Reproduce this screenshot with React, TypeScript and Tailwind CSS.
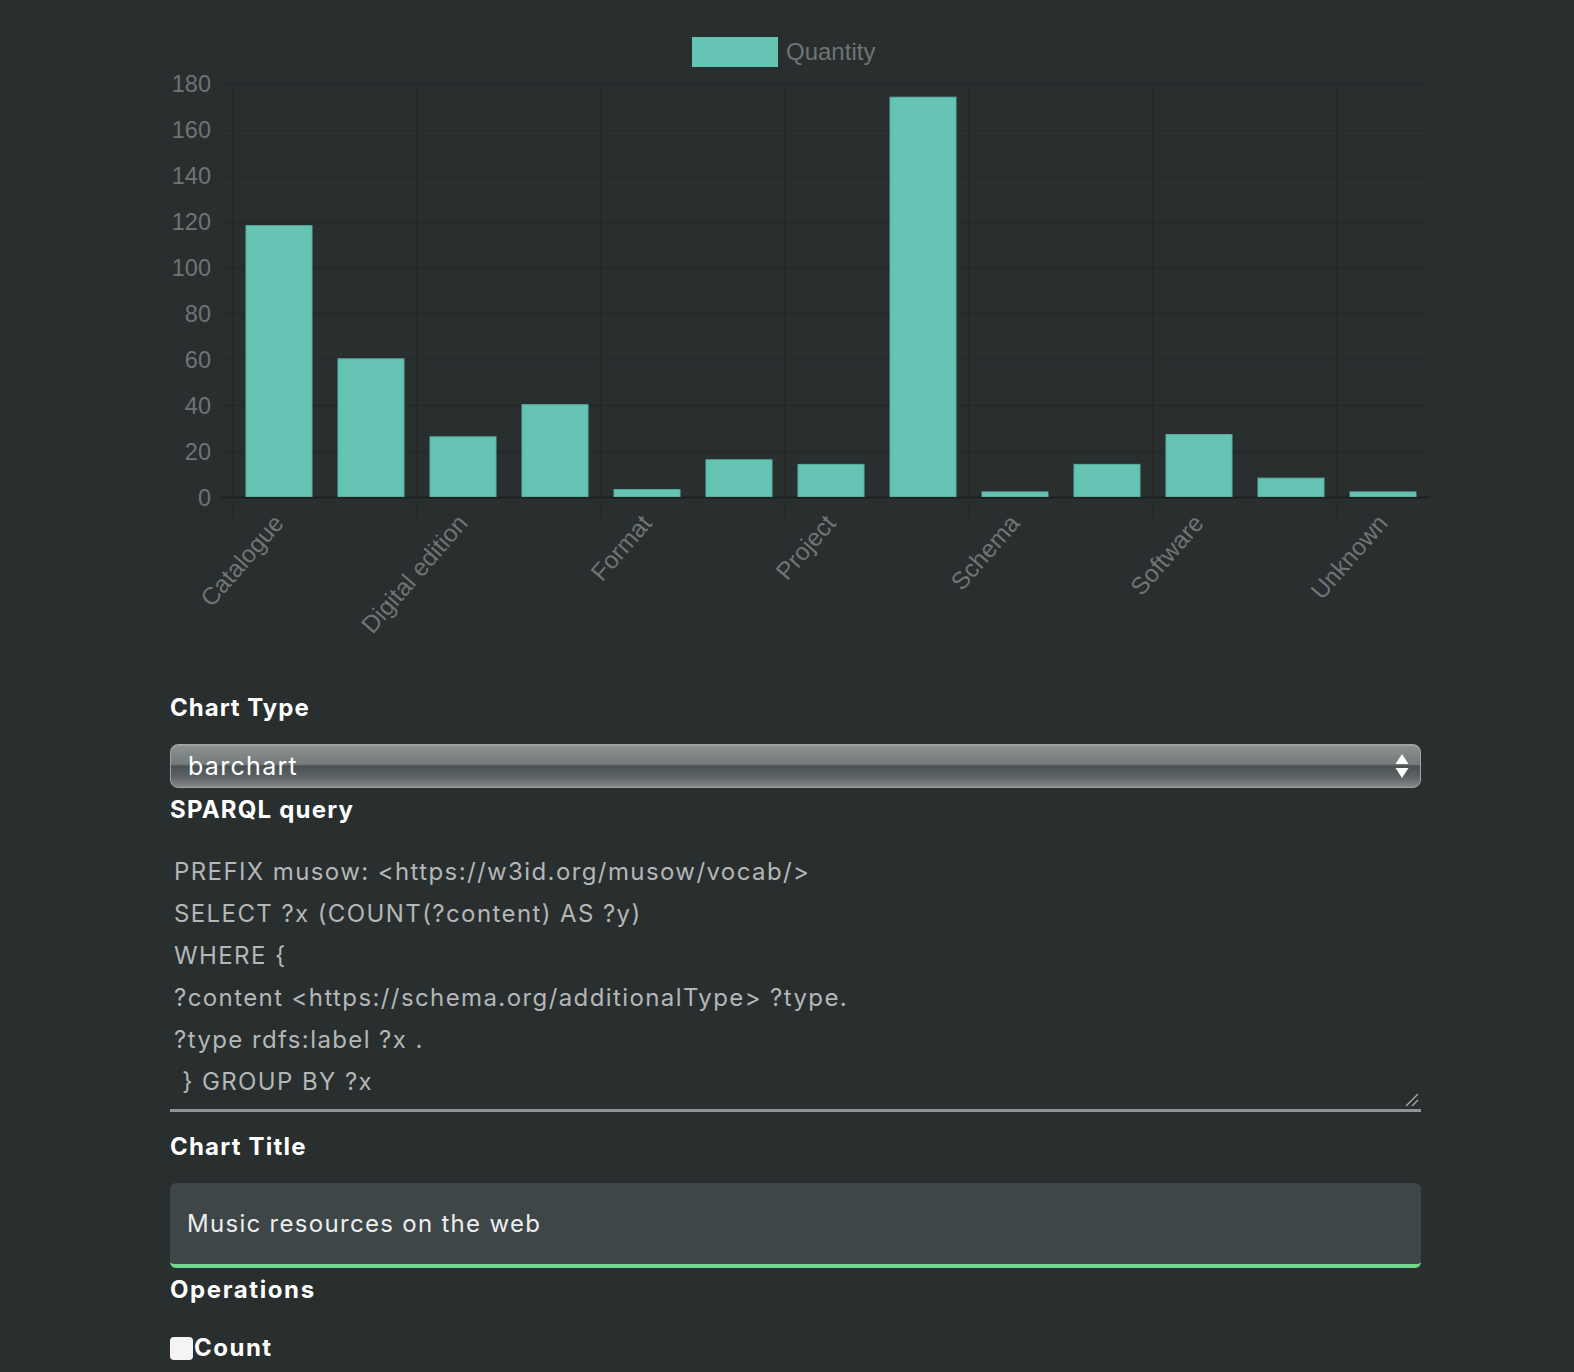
import React from 'react';

const values = [118, 60, 26, 40, 3, 16, 14, 174, 2, 14, 27, 8, 2];
const labels: Record<number, string> = {
  0: 'Catalogue',
  2: 'Digital edition',
  4: 'Format',
  6: 'Project',
  8: 'Schema',
  10: 'Software',
  12: 'Unknown',
};

const left = 233;
const right = 1429;
const zeroY = 497.5;
const unit = 413.1 / 180;
const catW = (right - left) / values.length;

function BarChart() {
  const ticks = [0, 20, 40, 60, 80, 100, 120, 140, 160, 180];
  return (
    <svg width="1574" height="660" className="block" style={{ fontFamily: '"Liberation Sans", Arial, sans-serif' }}>
      {/* legend */}
      <rect x="692" y="37" width="86" height="30" fill="#66c4b4" />
      <text x="786" y="60" fontSize="24" fill="#6f7474">Quantity</text>

      {/* horizontal grid */}
      {ticks.map((t) => {
        const y = zeroY - t * unit;
        return (
          <g key={t}>
            <line x1="221" x2={right} y1={y} y2={y} stroke={t === 0 ? '#1c2020' : '#232828'} strokeWidth={t === 0 ? 2 : 1} />
            <text x="211" y={y + 8} fontSize="23.5" fill="#6f7474" textAnchor="end">{t}</text>
          </g>
        );
      })}

      {/* vertical grid */}
      {[0, 1, 2, 3, 4, 5, 6].map((k) => {
        const x = left + k * catW * 2;
        return <line key={k} x1={x} x2={x} y1="84" y2="518" stroke="#232828" strokeWidth="1" />;
      })}

      {/* bars */}
      {values.map((v, i) => {
        const cx = left + catW * i + catW / 2;
        const h = v * unit;
        return (
          <rect key={i} x={cx - 33} y={zeroY - 1 - h} width="66" height={h} fill="#66c4b4" stroke="#5aaf9f" strokeWidth="1" />
        );
      })}

      {/* x labels */}
      {Object.entries(labels).map(([i, name]) => {
        const cx = left + catW * Number(i) + catW / 2;
        const x = cx + 6;
        const y = 524;
        return (
          <text key={i} x={x} y={y} fontSize="24.5" fill="#6f7474" textAnchor="end" transform={`rotate(-49 ${x} ${y})`}>
            {name}
          </text>
        );
      })}
    </svg>
  );
}

const query = [
  'PREFIX musow: <https://w3id.org/musow/vocab/>',
  'SELECT ?x (COUNT(?content) AS ?y)',
  'WHERE {',
  '?content <https://schema.org/additionalType> ?type.',
  '?type rdfs:label ?x .',
  ' } GROUP BY ?x',
];

export default function App() {
  return (
    <div className="min-h-[1372px] bg-[#292e2f] overflow-hidden" style={{ fontFamily: 'Inter, "Noto Sans", sans-serif' }}>
      <BarChart />

      <div className="ml-[170px] w-[1251px] pb-10">
        <div className="mt-[33px] text-[24px] leading-[30px] font-bold tracking-[1px] text-white">Chart Type</div>

        <div className="relative mt-[21px] h-[44px] rounded-[8px] border border-[#a0a4a4] bg-[linear-gradient(to_bottom,#8d9292_0%,#747979_46%,#4a5152_50%,#5c6263_75%,#838888_100%)] shadow-[inset_0_1px_0_rgba(255,255,255,0.15)]">
          <div className="pl-[17px] text-[25px] leading-[42px] text-white tracking-[1.3px]">barchart</div>
          <svg className="absolute right-[11px] top-[8px]" width="14" height="26" viewBox="0 0 14 26">
            <polygon points="7,1 13.5,11 0.5,11" fill="#ffffff" />
            <polygon points="0.5,15 13.5,15 7,25" fill="#ffffff" />
          </svg>
        </div>

        <div className="mt-[7px] text-[24px] leading-[30px] font-bold tracking-[1.2px] text-white">SPARQL query</div>

        <div className="relative mt-[26px] border-b-[3px] border-[#8f9497] pb-[6px] pl-[4px]">
          {query.map((line, i) => (
            <div key={i} className="text-[24px] leading-[42px] text-[#b3b7b7] whitespace-pre tracking-[1.4px]">{line}</div>
          ))}
          <svg className="absolute right-[2px] bottom-[2px]" width="14" height="14" viewBox="0 0 14 14">
            <line x1="1" y1="13" x2="13" y2="1" stroke="#a9adad" strokeWidth="1.3" />
            <line x1="7" y1="13" x2="13" y2="7" stroke="#a9adad" strokeWidth="1.3" />
          </svg>
        </div>

        <div className="mt-[20px] text-[24px] leading-[30px] font-bold tracking-[1.2px] text-white">Chart Title</div>

        <div className="mt-[21px] h-[85px] rounded-[6px] border-b-[4px] border-[#6fd98f] bg-[#3e4648] flex items-center pl-[17px]">
          <span className="text-[24px] leading-[29px] text-[#eceeee] tracking-[1.3px]">Music resources on the web</span>
        </div>

        <div className="mt-[7px] text-[24px] leading-[30px] font-bold tracking-[1.6px] text-white">Operations</div>

        <label className="mt-[28px] flex items-center text-[24px] leading-[30px] font-bold tracking-[1.5px] text-white">
          <span className="mr-[1px] inline-block h-[23px] w-[23px] rounded-[4px] bg-[#f4f4f4]" />
          Count
        </label>
      </div>
    </div>
  );
}
